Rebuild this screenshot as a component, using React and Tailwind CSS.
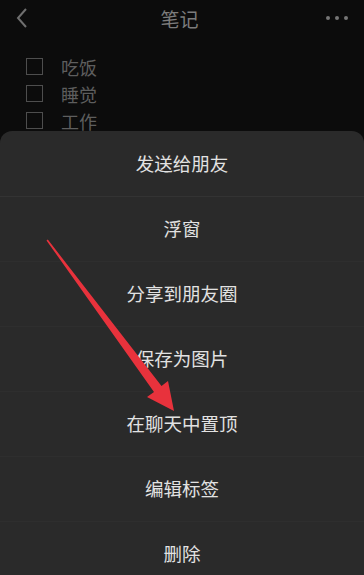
import React from "react";

const items = ["发送给朋友", "浮窗", "分享到朋友圈", "保存为图片", "在聊天中置顶", "编辑标签", "删除"];
const todos = ["吃饭", "睡觉", "工作"];

export default function App() {
  return (
    <div
      className="relative w-[364px] h-[575px] overflow-hidden bg-[#0c0c0c]"
      style={{ fontFamily: '"Noto Sans CJK SC", "Noto Sans", sans-serif' }}
    >
      <div className="flex items-center justify-between h-[36px] px-[14px]">
        <svg width="14" height="22" viewBox="0 0 14 22" className="ml-[1px]">
          <path d="M11 2 L3 11 L11 20" fill="none" stroke="#6f6f6f" strokeWidth="2" />
        </svg>
        <div className="text-[19px] text-[#7c7c7c] leading-none ml-[4px]">笔记</div>
        <div className="flex gap-[5px] mr-[2px]">
          <span className="w-[4px] h-[4px] rounded-full bg-[#777]" />
          <span className="w-[4px] h-[4px] rounded-full bg-[#777]" />
          <span className="w-[4px] h-[4px] rounded-full bg-[#777]" />
        </div>
      </div>
      <div className="flex flex-col pt-[17px] pl-[26px]">
        {todos.map((t) => (
          <div key={t} className="flex items-center h-[27px]">
            <span className="w-[17px] h-[17px] border border-[#4e4e4e]" />
            <span className="ml-[18px] text-[18px] text-[#5e5e5e] leading-none">{t}</span>
          </div>
        ))}
      </div>
      <div className="absolute left-0 right-0 top-[131px] bottom-0 rounded-t-[12px] bg-[#2a2a2a] flex flex-col">
        {items.map((t, i) => (
          <div
            key={t}
            className={
              "flex items-center justify-center text-[18.5px] text-[#e2e2e2] shrink-0 " +
              (i === 0 ? "h-[66px] border-b border-[#333333]" : "h-[65px] border-b border-[#2e2e2e]")
            }
          >
            {t}
          </div>
        ))}
      </div>
      <svg className="absolute left-0 top-0 pointer-events-none" width="364" height="575" viewBox="0 0 364 575">
        <polygon
          points="46.5,240.4 47.8,239.6 161.5,386 168,381 174,411 147,397 154,392"
          fill="#e8323c"
        />
      </svg>
    </div>
  );
}
